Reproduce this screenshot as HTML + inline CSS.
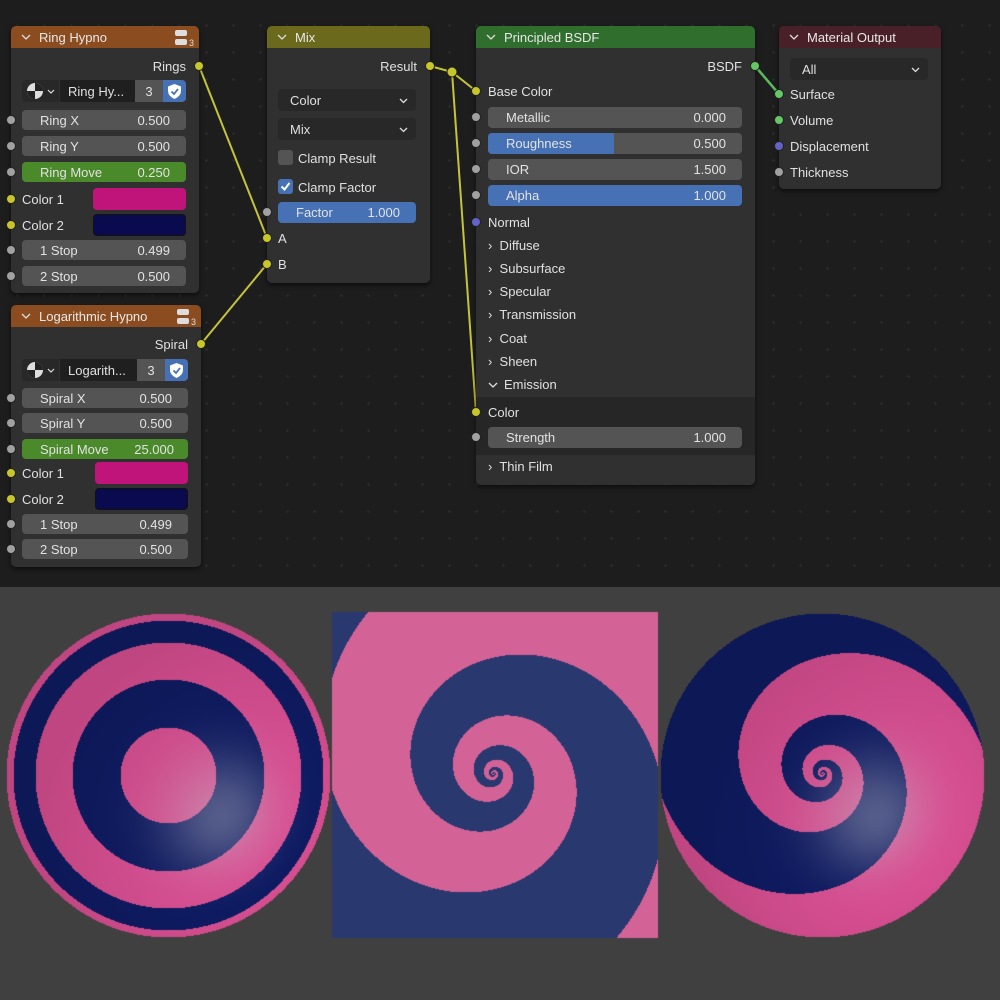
<!DOCTYPE html>
<html><head><meta charset="utf-8">
<style>
body{margin:0;width:1000px;height:1000px;position:relative;overflow:hidden;background:#1d1d1d;font-family:"Liberation Sans","DejaVu Sans",sans-serif}
#grid{position:absolute;left:0;top:0;width:1000px;height:587px;background-color:#1d1d1d;background-image:radial-gradient(circle,#2c2c2c 1px,transparent 1.5px);background-size:27px 27px;background-position:4px 12px}
.n{position:absolute;background:#303030;border-radius:5px;box-shadow:0 2px 5px rgba(0,0,0,.6)}
.h{position:absolute;left:0;right:0;top:0;height:22px;border-radius:5px 5px 0 0;color:#e8e8e8;font-size:13px;line-height:24px;padding-left:28px;box-sizing:border-box}
.h svg{position:absolute;left:10px;top:8px}
.t{position:absolute;font-size:13px;color:#e0e0e0;line-height:18px;white-space:nowrap}
.r{text-align:right}
.f{position:absolute;height:20px;border-radius:4px;background:#545454;font-size:13px;color:#e2e2e2;line-height:22px;overflow:hidden}
.f .l{position:absolute;left:18px;top:0}
.f .v{position:absolute;right:16px;top:0}
.f .fill{position:absolute;left:0;top:0;bottom:0;background:#4671b5}
.s{position:absolute;width:10px;height:10px;border-radius:50%;background:#a1a1a1;box-sizing:border-box;border:1px solid #222}
.y{background:#c7c729}.g{background:#63c763}.p{background:#6363c7}
.dd{position:absolute;height:22px;border-radius:4px;background:#282828;font-size:13px;color:#e0e0e0;line-height:24px;padding-left:12px;box-sizing:border-box}
.dd svg{position:absolute;right:8px;top:9px}
.sel{position:absolute;height:22px;font-size:13px;color:#e0e0e0;line-height:24px}
.cb{position:absolute;width:15px;height:15px;border-radius:3px;background:#545454}
</style></head><body>
<div id="grid"></div>

<svg style="position:absolute;left:0;top:0" width="1000" height="587">
<g fill="none" stroke="#c4c43a" stroke-width="2">
<path d="M199 66 L267 238"/>
<path d="M201 344 L267 264"/>
<path d="M430 66 L452 72 L476 91"/>
<path d="M452 72 L476 412"/>
</g>
<path d="M755 66 L779 94" stroke="#5cb85c" stroke-width="2.5" fill="none"/>
<circle cx="452" cy="72" r="5" fill="#c7c729" stroke="#222"/>
</svg>

<!-- Ring Hypno -->
<div class="n" style="left:11px;top:26px;width:188px;height:267px">
 <div class="h" style="background:#8b4c1f"><svg width="10" height="7"><polyline points="1,1 5,5 9,1" fill="none" stroke="#ddd" stroke-width="1.3"/></svg>Ring Hypno</div>
</div>
<svg style="position:absolute;left:173px;top:29px" width="24" height="18"><rect x="2" y="1" width="12" height="6" rx="2" fill="#ddd"/><rect x="2" y="10" width="12" height="6" rx="2" fill="#ddd"/><text x="16" y="17" font-size="9" fill="#ddd" font-family="Liberation Sans">3</text></svg>
<div class="t r" style="right:814px;top:58px">Rings</div>
<div class="s y" style="left:194px;top:61px"></div>
<div class="sel" style="left:22px;top:80px;width:37px;background:#282828;border-radius:4px 0 0 4px"><svg width="37" height="22"><circle cx="13" cy="11" r="8" fill="#ddd"/><path d="M13 3 A8 8 0 0 1 21 11 L13 11Z M13 11 L13 19 A8 8 0 0 1 5 11Z" fill="#222"/><polyline points="26,10 29,13 32,10" fill="none" stroke="#ddd" stroke-width="1.2"/></svg></div>
<div class="sel" style="left:60px;top:80px;width:75px;background:#1f1f1f;padding-left:8px;box-sizing:border-box">Ring Hy...</div>
<div class="sel" style="left:135px;top:80px;width:28px;background:#545454;text-align:center">3</div>
<div class="sel" style="left:163px;top:80px;width:23px;background:#4671b5;border-radius:0 4px 4px 0"><svg width="23" height="22"><path d="M11.5 4 L18 6.5 L18 11 Q18 16 11.5 19 Q5 16 5 11 L5 6.5Z" fill="#fff"/><polyline points="8.5,11.5 11,14 15,9" fill="none" stroke="#4671b5" stroke-width="1.8"/></svg></div>
<div class="s" style="left:6px;top:115px"></div><div class="f" style="left:22px;top:110px;width:164px"><span class="l">Ring X</span><span class="v">0.500</span></div>
<div class="s" style="left:6px;top:141px"></div><div class="f" style="left:22px;top:136px;width:164px"><span class="l">Ring Y</span><span class="v">0.500</span></div>
<div class="s" style="left:6px;top:167px"></div><div class="f" style="left:22px;top:162px;width:164px;background:#4a8a2a"><span class="l">Ring Move</span><span class="v">0.250</span></div>
<div class="s y" style="left:6px;top:194px"></div><div class="t" style="left:22px;top:191px">Color 1</div><div style="position:absolute;left:93px;top:188px;width:93px;height:22px;border-radius:4px;background:#c0147a"></div>
<div class="s y" style="left:6px;top:220px"></div><div class="t" style="left:22px;top:217px">Color 2</div><div style="position:absolute;left:93px;top:214px;width:93px;height:22px;border-radius:4px;background:#0a0a4e;border:1px solid #111;box-sizing:border-box"></div>
<div class="s" style="left:6px;top:245px"></div><div class="f" style="left:22px;top:240px;width:164px"><span class="l">1 Stop</span><span class="v">0.499</span></div>
<div class="s" style="left:6px;top:271px"></div><div class="f" style="left:22px;top:266px;width:164px"><span class="l">2 Stop</span><span class="v">0.500</span></div>

<!-- Log Hypno -->
<div class="n" style="left:11px;top:305px;width:190px;height:262px">
 <div class="h" style="background:#8b4c1f"><svg width="10" height="7"><polyline points="1,1 5,5 9,1" fill="none" stroke="#ddd" stroke-width="1.3"/></svg>Logarithmic Hypno</div>
</div>
<svg style="position:absolute;left:175px;top:308px" width="24" height="18"><rect x="2" y="1" width="12" height="6" rx="2" fill="#ddd"/><rect x="2" y="10" width="12" height="6" rx="2" fill="#ddd"/><text x="16" y="17" font-size="9" fill="#ddd" font-family="Liberation Sans">3</text></svg>
<div class="t r" style="right:812px;top:336px">Spiral</div>
<div class="s y" style="left:196px;top:339px"></div>
<div class="sel" style="left:22px;top:359px;width:37px;background:#282828;border-radius:4px 0 0 4px"><svg width="37" height="22"><circle cx="13" cy="11" r="8" fill="#ddd"/><path d="M13 3 A8 8 0 0 1 21 11 L13 11Z M13 11 L13 19 A8 8 0 0 1 5 11Z" fill="#222"/><polyline points="26,10 29,13 32,10" fill="none" stroke="#ddd" stroke-width="1.2"/></svg></div>
<div class="sel" style="left:60px;top:359px;width:77px;background:#1f1f1f;padding-left:8px;box-sizing:border-box">Logarith...</div>
<div class="sel" style="left:137px;top:359px;width:28px;background:#545454;text-align:center">3</div>
<div class="sel" style="left:165px;top:359px;width:23px;background:#4671b5;border-radius:0 4px 4px 0"><svg width="23" height="22"><path d="M11.5 4 L18 6.5 L18 11 Q18 16 11.5 19 Q5 16 5 11 L5 6.5Z" fill="#fff"/><polyline points="8.5,11.5 11,14 15,9" fill="none" stroke="#4671b5" stroke-width="1.8"/></svg></div>
<div class="s" style="left:6px;top:393px"></div><div class="f" style="left:22px;top:388px;width:166px"><span class="l">Spiral X</span><span class="v">0.500</span></div>
<div class="s" style="left:6px;top:418px"></div><div class="f" style="left:22px;top:413px;width:166px"><span class="l">Spiral Y</span><span class="v">0.500</span></div>
<div class="s" style="left:6px;top:444px"></div><div class="f" style="left:22px;top:439px;width:166px;background:#4a8a2a"><span class="l">Spiral Move</span><span class="v" style="right:14px">25.000</span></div>
<div class="s y" style="left:6px;top:468px"></div><div class="t" style="left:22px;top:465px">Color 1</div><div style="position:absolute;left:95px;top:462px;width:93px;height:22px;border-radius:4px;background:#c0147a"></div>
<div class="s y" style="left:6px;top:494px"></div><div class="t" style="left:22px;top:491px">Color 2</div><div style="position:absolute;left:95px;top:488px;width:93px;height:22px;border-radius:4px;background:#0a0a4e;border:1px solid #111;box-sizing:border-box"></div>
<div class="s" style="left:6px;top:519px"></div><div class="f" style="left:22px;top:514px;width:166px"><span class="l">1 Stop</span><span class="v">0.499</span></div>
<div class="s" style="left:6px;top:544px"></div><div class="f" style="left:22px;top:539px;width:166px"><span class="l">2 Stop</span><span class="v">0.500</span></div>

<!-- Mix -->
<div class="n" style="left:267px;top:26px;width:163px;height:257px">
 <div class="h" style="background:#6b6a1c"><svg width="10" height="7"><polyline points="1,1 5,5 9,1" fill="none" stroke="#ddd" stroke-width="1.3"/></svg>Mix</div>
</div>
<div class="t r" style="right:583px;top:58px">Result</div>
<div class="s y" style="left:425px;top:61px"></div>
<div class="dd" style="left:278px;top:89px;width:138px">Color<svg width="9" height="6"><polyline points="1,1 4.5,4.5 8,1" fill="none" stroke="#ddd" stroke-width="1.3"/></svg></div>
<div class="dd" style="left:278px;top:118px;width:138px">Mix<svg width="9" height="6"><polyline points="1,1 4.5,4.5 8,1" fill="none" stroke="#ddd" stroke-width="1.3"/></svg></div>
<div class="cb" style="left:278px;top:150px"></div><div class="t" style="left:298px;top:150px">Clamp Result</div>
<div class="cb" style="left:278px;top:179px;background:#4671b5"><svg width="15" height="15"><polyline points="3.5,7.5 6.5,10.5 11.5,4" fill="none" stroke="#fff" stroke-width="2"/></svg></div><div class="t" style="left:298px;top:179px">Clamp Factor</div>
<div class="s" style="left:262px;top:207px"></div><div class="f" style="left:278px;top:202px;width:138px;height:21px;background:#4671b5"><span class="l">Factor</span><span class="v">1.000</span></div>
<div class="s y" style="left:262px;top:233px"></div><div class="t" style="left:278px;top:230px">A</div>
<div class="s y" style="left:262px;top:259px"></div><div class="t" style="left:278px;top:256px">B</div>

<!-- Principled -->
<div class="n" style="left:476px;top:26px;width:279px;height:459px">
 <div class="h" style="background:#2f6e2d"><svg width="10" height="7"><polyline points="1,1 5,5 9,1" fill="none" stroke="#ddd" stroke-width="1.3"/></svg>Principled BSDF</div>
 <div style="position:absolute;left:0;right:0;top:371px;height:58px;background:#262626"></div>
</div>
<div class="t r" style="right:258px;top:58px">BSDF</div>
<div class="s g" style="left:750px;top:61px"></div>
<div class="s y" style="left:471px;top:86px"></div><div class="t" style="left:488px;top:83px">Base Color</div>
<div class="s" style="left:471px;top:112px"></div><div class="f" style="left:488px;top:107px;width:254px;height:21px"><span class="l">Metallic</span><span class="v">0.000</span></div>
<div class="s" style="left:471px;top:138px"></div><div class="f" style="left:488px;top:133px;width:254px;height:21px"><div class="fill" style="width:126px"></div><span class="l">Roughness</span><span class="v">0.500</span></div>
<div class="s" style="left:471px;top:164px"></div><div class="f" style="left:488px;top:159px;width:254px;height:21px"><span class="l">IOR</span><span class="v">1.500</span></div>
<div class="s" style="left:471px;top:190px"></div><div class="f" style="left:488px;top:185px;width:254px;height:21px;background:#4671b5"><span class="l">Alpha</span><span class="v">1.000</span></div>
<div class="s p" style="left:471px;top:217px"></div><div class="t" style="left:488px;top:214px">Normal</div>
<div class="t" style="left:488px;top:237px">›&nbsp; Diffuse</div>
<div class="t" style="left:488px;top:260px">›&nbsp; Subsurface</div>
<div class="t" style="left:488px;top:283px">›&nbsp; Specular</div>
<div class="t" style="left:488px;top:306px">›&nbsp; Transmission</div>
<div class="t" style="left:488px;top:330px">›&nbsp; Coat</div>
<div class="t" style="left:488px;top:353px">›&nbsp; Sheen</div>
<div class="t" style="left:488px;top:376px"><svg width="10" height="7" style="margin-right:6px"><polyline points="1,1 5,5 9,1" fill="none" stroke="#ddd" stroke-width="1.3"/></svg>Emission</div>
<div class="s y" style="left:471px;top:407px"></div><div class="t" style="left:488px;top:404px">Color</div>
<div class="s" style="left:471px;top:432px"></div><div class="f" style="left:488px;top:427px;width:254px;height:21px"><span class="l">Strength</span><span class="v">1.000</span></div>
<div class="t" style="left:488px;top:458px">›&nbsp; Thin Film</div>

<!-- Material Output -->
<div class="n" style="left:779px;top:26px;width:162px;height:163px">
 <div class="h" style="background:#4a2028"><svg width="10" height="7"><polyline points="1,1 5,5 9,1" fill="none" stroke="#ddd" stroke-width="1.3"/></svg>Material Output</div>
</div>
<div class="dd" style="left:790px;top:58px;width:138px">All<svg width="9" height="6"><polyline points="1,1 4.5,4.5 8,1" fill="none" stroke="#ddd" stroke-width="1.3"/></svg></div>
<div class="s g" style="left:774px;top:89px"></div><div class="t" style="left:790px;top:86px">Surface</div>
<div class="s g" style="left:774px;top:115px"></div><div class="t" style="left:790px;top:112px">Volume</div>
<div class="s p" style="left:774px;top:141px"></div><div class="t" style="left:790px;top:138px">Displacement</div>
<div class="s" style="left:774px;top:167px"></div><div class="t" style="left:790px;top:164px">Thickness</div>

<canvas id="c" width="1000" height="413" style="position:absolute;left:0;top:587px"></canvas>
<script>
(function(){
var cv=document.getElementById('c'),ctx=cv.getContext('2d');
var W=1000,H=413,img=ctx.createImageData(W,H),d=img.data;
var pink=[208,76,140],blue=[14,26,94],fp=[211,98,150],fb=[42,56,112];
var L4=Math.log(4.2);
function spiral(dx,dy,r0){var r=Math.hypot(dx,dy)+1e-6;var t=Math.atan2(dy,dx);var ph=Math.log(r/r0)/L4-t/(2*Math.PI);ph-=Math.floor(ph);return ph<0.5;}
var lx=0.6,ly=0.45,lz=0.66,ln=Math.hypot(lx,ly,lz);lx/=ln;ly/=ln;lz/=ln;
var hx=lx,hy=ly,hz=lz+1,hn=Math.hypot(hx,hy,hz);hx/=hn;hy/=hn;hz/=hn;
function shade(base,x,y,cx,cy,R){var nx=(x-cx)/R,ny=(y-cy)/R,nz=Math.sqrt(Math.max(0,1-nx*nx-ny*ny));
var lam=Math.max(0,nx*lx+ny*ly+nz*lz);var sp=Math.pow(Math.max(0,nx*hx+ny*hy+nz*hz),14)*0.4;
var k=0.92+0.12*lam;return [Math.min(255,base[0]*k+(190-base[0]*k)*sp),base[1]*k+(190-base[1]*k)*sp,base[2]*k+(200-base[2]*k)*sp];}
for(var y=0;y<H;y++){var Y=y+587;for(var x=0;x<W;x++){var c=[64,64,64];
 var dx=x-168,dy=Y-775,r=Math.hypot(dx,dy);
 if(r<162){var b=(r<48)?0:(r<96)?1:(r<133)?0:(r<155)?1:0;c=shade(b?blue:pink,x,Y,168,775,162);}
 else if(x>=332&&x<658&&Y>=612&&Y<938){c=spiral(x-493,Y-773,81)?fb:fp;}
 else{dx=x-822;dy=Y-775;r=Math.hypot(dx,dy);if(r<162){c=shade(spiral(x-822,Y-773,40)?blue:pink,x,Y,822,775,162);}}
 var i=(y*W+x)*4;d[i]=c[0];d[i+1]=c[1];d[i+2]=c[2];d[i+3]=255;}}
ctx.putImageData(img,0,0);
})();
</script>
</body></html>
